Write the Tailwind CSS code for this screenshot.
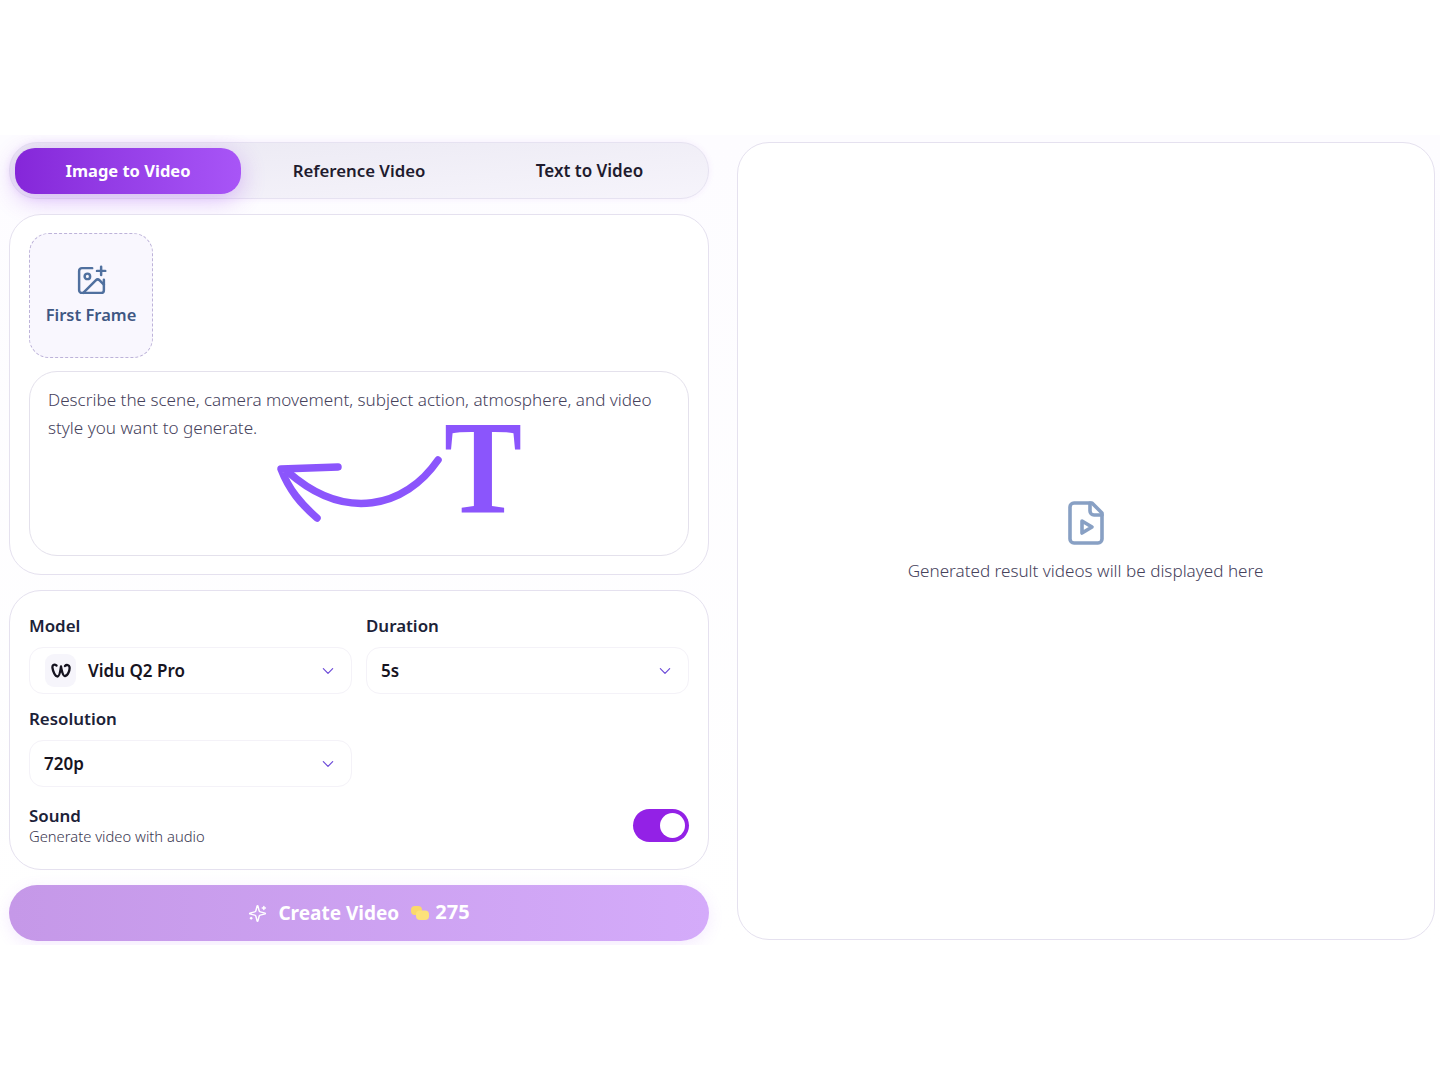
<!DOCTYPE html>
<html lang="en">
<head>
    <meta charset="UTF-8">
    <title>Create Video</title>
    <script src="https://cdn.jsdelivr.net/npm/@tailwindcss/browser@4"></script>
</head>
<body class="bg-white min-h-screen font-['Noto_Sans',sans-serif]">
    <div class="pt-[135px]">
        <div class="h-[810px] overflow-hidden flex gap-[28px] pl-[9px] pr-[5px] pt-[7px] bg-gradient-to-b from-[#fdfcff] to-white">

            <!-- Left column -->
            <div class="w-[700px] flex flex-col gap-[15px]">

                <!-- Tabs -->
                <div class="h-[57px] rounded-[28px] border border-[#e6e2f1] bg-gradient-to-br from-[#ebe9f3] to-[#f6f4fb] p-[5px] flex shadow-[0_0_6px_rgba(147,51,234,0.08)]">
                    <button class="w-[226px] h-[46px] rounded-[20px] bg-gradient-to-r from-[#8526d9] to-[#a855f7] text-white font-bold text-[16.5px] shadow-[0_6px_24px_rgba(147,51,234,0.3)]">Image to Video</button>
                    <button class="w-[236px] h-[46px] text-[#1f1b2e] font-semibold text-[16.8px]">Reference Video</button>
                    <button class="w-[225px] h-[46px] text-[#1f1b2e] font-semibold text-[17px]">Text to Video</button>
                </div>

                <!-- Upload and prompt -->
                <div class="h-[361px] rounded-[32px] border border-[#e5e1ef] bg-white px-[19px] pt-[18px] flex flex-col gap-[13px]">
                    <div class="w-[124px] h-[125px] rounded-[20px] border border-dashed border-[#bdb3d9] bg-[#f9f7fe] flex flex-col items-center justify-center">
                        <svg width="33" height="33" viewBox="0 0 24 24" fill="none" stroke="#50709f" stroke-width="1.8" stroke-linecap="round" stroke-linejoin="round"><path d="M16 5h6"/><path d="M19 2v6"/><path d="M21 11.5V19a2 2 0 0 1-2 2H5a2 2 0 0 1-2-2V5a2 2 0 0 1 2-2h7.5"/><path d="m21 15-3.086-3.086a2 2 0 0 0-2.828 0L6 21"/><circle cx="9" cy="9" r="2"/></svg>
                        <span class="mt-[5px] text-[16.5px] font-semibold text-[#3f5783] leading-[26px]">First Frame</span>
                    </div>
                    <div class="relative h-[185px] rounded-[28px] border border-[#e4e1ec] bg-white px-[18px] py-[14px]">
                        <p class="text-[17.1px] font-light leading-[28px] text-[#46425c] w-[620px]">Describe the scene, camera movement, subject action, atmosphere, and video style you want to generate.</p>
                        <svg class="absolute left-[-1px] top-[-1px]" width="660" height="185" viewBox="29 371 660 185" fill="none" stroke="#8b55fc" stroke-width="7.5" stroke-linecap="round" stroke-linejoin="round"><path d="M438 460C405 508 345 522 288 472"/><path d="M338 467L281 469C289 490 301 504 317 518"/></svg>
                        <span class="absolute left-[414px] top-[46px] origin-left scale-x-[0.88] font-['Liberation_Serif',serif] font-bold text-[133px] leading-[100px] text-[#8b55fc]">T</span>
                    </div>
                </div>

                <!-- Settings -->
                <div class="h-[280px] rounded-[32px] border border-[#e5e1ef] bg-white px-[19px] pt-[22px]">
                    <div class="grid grid-cols-2 gap-x-[14px]">
                        <div>
                            <div class="text-[16.9px] font-semibold text-[#1c2238] leading-[26px]">Model</div>
                            <div class="mt-[8px] h-[47px] rounded-[14px] border border-[#f4f2f8] flex items-center pl-[15px] pr-[16px]">
                                <span class="w-[31px] h-[33px] rounded-[9px] bg-[#f6f5fb] flex items-center justify-center">
                                    <svg width="20" height="15" viewBox="0 0 20 15" fill="none" stroke="#15131f" stroke-width="2.3" stroke-linecap="round" stroke-linejoin="round"><path d="M5.5 2.5C3 .8 1 2 1.5 5C2 8.5 4 13.5 6.5 13.5C9 13.5 9.5 6 10 3.5C10.5 7 12 13.5 14 13C17 12.5 19 7 18.5 4C18.2 2 15.5 1.2 14 3"/></svg>
                                </span>
                                <span class="ml-[12px] text-[17px] font-semibold text-[#17141f]">Vidu Q2 Pro</span>
                                <svg class="ml-auto" width="14" height="14" viewBox="0 0 24 24" fill="none" stroke="#6a48d8" stroke-width="2" stroke-linecap="round" stroke-linejoin="round"><path d="m4 8 8 8 8-8"/></svg>
                            </div>
                        </div>
                        <div>
                            <div class="text-[16.9px] font-semibold text-[#1c2238] leading-[26px]">Duration</div>
                            <div class="mt-[8px] h-[47px] rounded-[14px] border border-[#f4f2f8] flex items-center pl-[14px] pr-[16px]">
                                <span class="text-[17px] font-semibold text-[#17141f]">5s</span>
                                <svg class="ml-auto" width="14" height="14" viewBox="0 0 24 24" fill="none" stroke="#6a48d8" stroke-width="2" stroke-linecap="round" stroke-linejoin="round"><path d="m4 8 8 8 8-8"/></svg>
                            </div>
                        </div>
                        <div class="mt-[12px]">
                            <div class="text-[16.9px] font-semibold text-[#1c2238] leading-[26px]">Resolution</div>
                            <div class="mt-[8px] h-[47px] rounded-[14px] border border-[#f4f2f8] flex items-center pl-[14px] pr-[16px]">
                                <span class="text-[17px] font-semibold text-[#17141f]">720p</span>
                                <svg class="ml-auto" width="14" height="14" viewBox="0 0 24 24" fill="none" stroke="#6a48d8" stroke-width="2" stroke-linecap="round" stroke-linejoin="round"><path d="m4 8 8 8 8-8"/></svg>
                            </div>
                        </div>
                    </div>
                    <div class="mt-[17px] flex items-center justify-between">
                        <div>
                            <div class="text-[16.9px] font-semibold text-[#1c2238] leading-[23px]">Sound</div>
                            <div class="text-[14.75px] font-light text-[#3a3750] leading-[19px]">Generate video with audio</div>
                        </div>
                        <div class="w-[56px] h-[33px] rounded-full bg-[#9321e6] flex items-center justify-end pr-[4px]">
                            <span class="w-[25px] h-[25px] rounded-full bg-white"></span>
                        </div>
                    </div>
                </div>

                <!-- Submit -->
                <button class="h-[56px] rounded-[28px] bg-gradient-to-r from-[#c598e8] to-[#d4abfa] text-white flex items-center justify-center shadow-[0_4px_16px_rgba(168,85,247,0.12)]">
                    <svg width="19" height="19" viewBox="0 0 24 24" fill="none" stroke="white" stroke-width="1.8" stroke-linecap="round" stroke-linejoin="round"><path d="M9.94 15.5A2 2 0 0 0 8.5 14.06l-6.13-1.58a.5.5 0 0 1 0-.96L8.5 9.94A2 2 0 0 0 9.94 8.5l1.58-6.13a.5.5 0 0 1 .96 0L14.06 8.5a2 2 0 0 0 1.44 1.44l6.13 1.58a.5.5 0 0 1 0 .96L15.5 14.06a2 2 0 0 0-1.44 1.44l-1.58 6.13a.5.5 0 0 1-.96 0Z"/><path d="M20 3v4"/><path d="M22 5h-4"/><path d="M4 17v2"/><path d="M5 18H3"/></svg>
                    <span class="ml-[11px] text-[19px] font-bold">Create Video</span>
                    <svg class="ml-[12px]" width="18" height="14" viewBox="0 0 18 14"><rect x="0" y="0" width="11" height="9" rx="4" fill="#fbd96a"/><rect x="5" y="4.5" width="13" height="9.5" rx="4" fill="#fde27a"/></svg>
                    <span class="ml-[6px] mt-[-2px] text-[20px] font-bold">275</span>
                </button>
            </div>

            <!-- Result panel -->
            <div class="w-[698px] h-[798px] rounded-[32px] border border-[#e5e1ef] bg-white flex flex-col items-center justify-center">
                <svg class="mt-[1px] mr-[1px]" width="48" height="48" viewBox="0 0 24 24" fill="none" stroke="#88a0c4" stroke-width="1.8" stroke-linecap="round" stroke-linejoin="round"><path d="M15 2H6a2 2 0 0 0-2 2v16a2 2 0 0 0 2 2h12a2 2 0 0 0 2-2V7Z"/><path d="M14 2v4a2 2 0 0 0 2 2h4"/><path d="m10 11 5 3-5 3v-6Z"/></svg>
                <p class="mt-[10px] mr-[1px] text-[17.1px] font-light leading-[28px] text-[#46425c]">Generated result videos will be displayed here</p>
            </div>
        </div>
    </div>
</body>
</html>
